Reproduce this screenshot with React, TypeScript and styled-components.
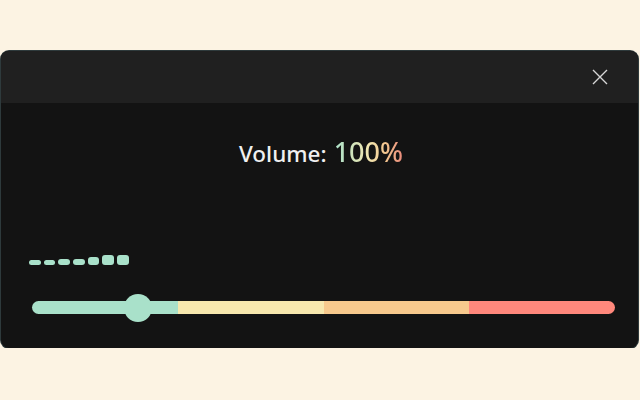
import React from "react";
import styled, { createGlobalStyle } from "styled-components";

const Global = createGlobalStyle`
  html, body { margin: 0; padding: 0; background: #fcf3e3; }
  body { font-family: "Noto Sans", "Open Sans", sans-serif; }
`;

const Window = styled.div`
  margin: 51px 2px 0 1px;
  height: 297px;
  border-radius: 8px;
  overflow: hidden;
  background: #131313;
  box-shadow: 0 0 0 1px #2e3a3c;
  display: flex;
  flex-direction: column;
`;

const TitleBar = styled.div`
  height: 52px;
  background: #202020;
  display: flex;
  align-items: center;
  justify-content: flex-end;
  padding-right: 28px;
`;

const CloseButton = styled.button`
  background: none;
  border: none;
  padding: 0;
  width: 20px;
  height: 20px;
  display: flex;
  align-items: center;
  justify-content: center;
  cursor: pointer;
`;

const Body = styled.div`
  flex: 1;
  display: flex;
  flex-direction: column;
  padding: 27px 23px 0 31px;
`;

const Title = styled.div`
  display: flex;
  justify-content: center;
  align-items: baseline;
  gap: 7px;
  height: 44px;
  padding-right: 5px;
`;

const Label = styled.span`
  color: #f0f0f0;
  font-size: 22.5px;
  font-weight: 500;
  line-height: 44px;
`;

const Value = styled.span`
  font-size: 27px;
  font-weight: 500;
  line-height: 44px;
  background: linear-gradient(90deg, #a9e1ca 0%, #f2e6b0 50%, #f2c48e 75%, #e8887a 100%);
  -webkit-background-clip: text;
  background-clip: text;
  color: transparent;
`;

const Bars = styled.div`
  margin: 81px 0 0 -3px;
  display: flex;
  align-items: flex-end;
  gap: 3px;
  height: 10px;
`;

const Bar = styled.div<{ $h: number }>`
  width: 11.7px;
  height: ${(p) => p.$h}px;
  border-radius: 3px;
  background: #a9e1ca;
`;

const Track = styled.div`
  position: relative;
  margin-top: 36px;
  height: 13px;
  border-radius: 7px;
  display: flex;
`;

const Segment = styled.div<{ $c: string; $first?: boolean; $last?: boolean }>`
  flex: 1;
  background: ${(p) => p.$c};
  border-radius: ${(p) => (p.$first ? "7px 0 0 7px" : p.$last ? "0 7px 7px 0" : "0")};
`;

const Thumb = styled.div`
  position: absolute;
  left: 92px;
  top: 50%;
  width: 28px;
  height: 28px;
  margin-top: -14px;
  border-radius: 50%;
  background: #a9e1ca;
`;

const heights = [5, 5, 6, 6, 8, 10, 10];

export default function App() {
  return (
    <>
      <Global />
      <Window>
        <TitleBar>
          <CloseButton aria-label="Close">
            <svg width="18" height="18" viewBox="0 0 18 18">
              <path d="M2 2 L16 16 M16 2 L2 16" stroke="#d6d6d6" strokeWidth="1.4" fill="none" />
            </svg>
          </CloseButton>
        </TitleBar>
        <Body>
          <Title>
            <Label>Volume:</Label>
            <Value>100%</Value>
          </Title>
          <Bars>
            {heights.map((h, i) => (
              <Bar key={i} $h={h} />
            ))}
          </Bars>
          <Track>
            <Segment $c="#a9e1ca" $first />
            <Segment $c="#f7e8ae" />
            <Segment $c="#f7c98d" />
            <Segment $c="#ff887c" $last />
            <Thumb />
          </Track>
        </Body>
      </Window>
    </>
  );
}
